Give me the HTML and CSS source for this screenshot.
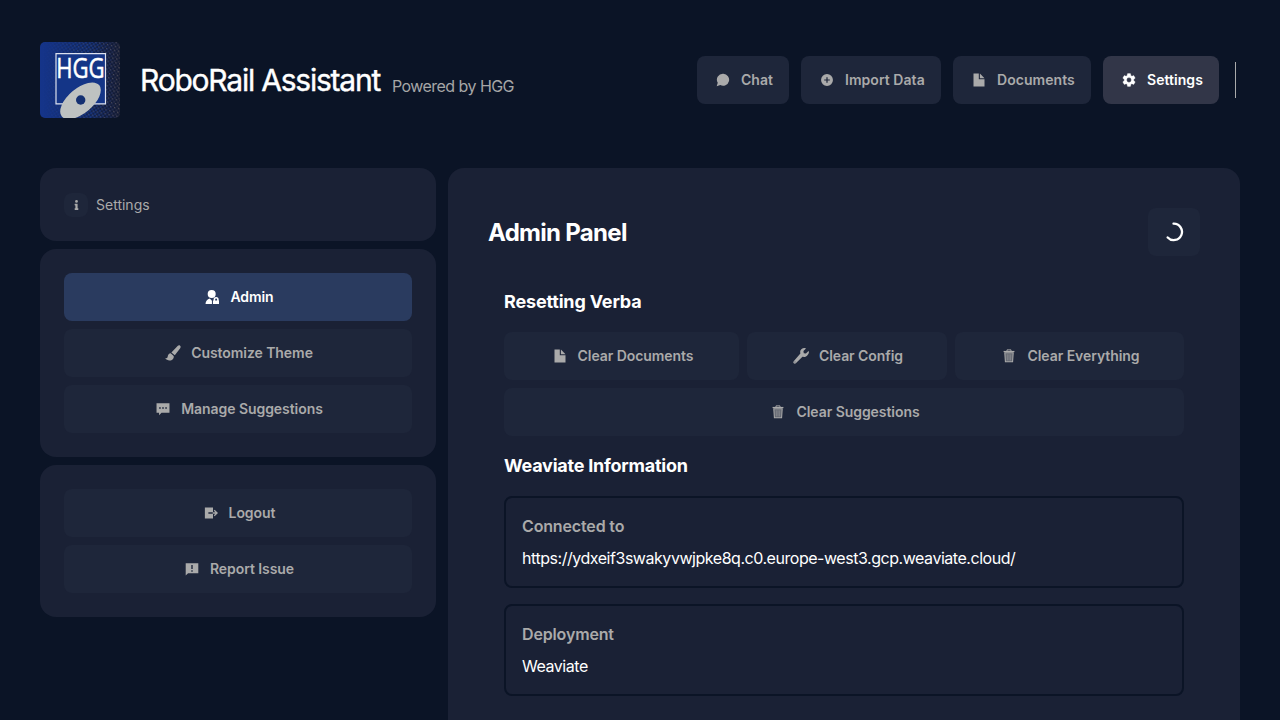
FILE: index.html
```html
<!DOCTYPE html>
<html lang="en">
<head>
<meta charset="utf-8">
<title>RoboRail Assistant</title>
<link rel="stylesheet" href="styles.css">
</head>
<body>
<svg class="defs" aria-hidden="true">
  <symbol id="doc" viewBox="0 0 14 14"><path d="M1.5 .5h5.3v5.8h5.7v7.2h-11z"/><path d="M7.9 .5l4.6 4.8H7.9z"/></symbol>
  <symbol id="trash" viewBox="0 0 16 16"><path d="M5.7 2.3V1h4.6v1.3" fill="none" stroke="currentColor" stroke-width="1.1"/><path d="M1.8 2.2h12.4v1.4H1.8z"/><path d="M3.2 4.2h9.6l-.7 10.4H3.9z" fill-opacity=".5" stroke="currentColor" stroke-width="1.2"/><path d="M6 6l.2 7M8 6v7M10 6l-.2 7" fill="none" stroke="currentColor" stroke-width=".5"/></symbol>
</svg>
<header class="header">
  <div class="brand">
    <svg class="logo" viewBox="0 0 80 76">
      <defs>
        <linearGradient id="logo-blue"><stop offset="0" stop-color="#153489"/><stop offset=".62" stop-color="#17357f"/><stop offset=".85" stop-color="#1d2b58"/><stop offset="1" stop-color="#292b3c"/></linearGradient>
        <linearGradient id="fade"><stop offset=".05" stop-color="#000"/><stop offset="1" stop-color="#fff"/></linearGradient>
        <pattern id="dots" width="4" height="4" patternUnits="userSpaceOnUse" patternTransform="rotate(12)"><path d="M0 0h2v2H0zM2 2h2v2H2z" fill="#111a35"/><path d="M2 0h1v1H2z" fill="#54515a"/></pattern>
        <mask id="dot-mask"><path d="M0 0h80v76H0z" fill="url(#fade)"/></mask>
      </defs>
      <path d="M0 0h80v76H0z" fill="url(#logo-blue)"/>
      <path d="M0 0h80v76H0z" fill="url(#dots)" mask="url(#dot-mask)"/>
      <path d="M16 11.7h49.5v50.2H16z" fill="#143587" stroke="#dce1ef" stroke-width="1.2"/>
      <text class="logo-text" x="16.2" y="35.8" textLength="48.5" lengthAdjust="spacingAndGlyphs">HGG</text>
      <ellipse cx="40.5" cy="58.8" rx="24.4" ry="12.4" transform="rotate(-40 40.5 58.8)" fill="#bec2c1"/>
      <circle cx="40.7" cy="58" r="4.7" fill="#143072"/>
    </svg>
    <h1 class="title">RoboRail Assistant</h1>
    <span class="tagline">Powered by HGG</span>
  </div>
  <nav class="nav">
    <button class="btn nav-btn chat"><svg class="icon" viewBox="0 0 16 16"><path d="M8.4 .8a6.9 6.9 0 1 1-3.5 13L.8 15l1.2-3.8A6.9 6.9 0 0 1 8.4 .8z"/></svg><span>Chat</span></button>
    <button class="btn nav-btn import"><svg class="icon" viewBox="0 0 16 16"><path fill-rule="evenodd" d="M8 1.2a6.8 6.8 0 1 0 0 13.6A6.8 6.8 0 0 0 8 1.2zM7.3 4.8h1.4v2.5h2.5v1.4H8.7v2.5H7.3V8.7H4.8V7.3h2.5z"/></svg><span>Import Data</span></button>
    <button class="btn nav-btn documents"><svg class="icon"><use href="#doc"/></svg><span>Documents</span></button>
    <button class="btn nav-btn settings selected"><svg class="icon" viewBox="1.5 1.5 21 21"><path d="M19.14 12.94c.04-.3.06-.61.06-.94s-.02-.64-.07-.94l2.03-1.58a.49.49 0 0 0 .12-.61l-1.92-3.32a.488.488 0 0 0-.59-.22l-2.39.96c-.5-.38-1.03-.7-1.62-.94l-.36-2.54a.484.484 0 0 0-.48-.41h-3.84c-.24 0-.43.17-.47.41l-.36 2.54c-.59.24-1.13.57-1.62.94l-2.39-.96c-.22-.08-.47 0-.59.22L2.74 8.87c-.12.21-.08.47.12.61l2.03 1.58c-.05.3-.09.63-.09.94s.02.64.07.94l-2.03 1.58a.49.49 0 0 0-.12.61l1.92 3.32c.12.22.37.29.59.22l2.39-.96c.5.38 1.03.7 1.62.94l.36 2.54c.05.24.24.41.48.41h3.84c.24 0 .44-.17.47-.41l.36-2.54c.59-.24 1.13-.56 1.62-.94l2.39.96c.22.08.47 0 .59-.22l1.92-3.32a.49.49 0 0 0-.12-.61zM12 15.6A3.6 3.6 0 1 1 12 8.4a3.6 3.6 0 0 1 0 7.2z" stroke="currentColor" stroke-width=".4"/></svg><span>Settings</span></button>
    <span class="divider"></span>
  </nav>
</header>
<main class="layout">
  <aside class="sidebar">
    <section class="panel crumb">
      <span class="info"><svg viewBox="0 0 192 512"><path d="M20 424.229h20V279.771H20c-11.046 0-20-8.954-20-20V212c0-11.046 8.954-20 20-20h112c11.046 0 20 8.954 20 20v212.229h20c11.046 0 20 8.954 20 20V492c0 11.046-8.954 20-20 20H20c-11.046 0-20-8.954-20-20v-47.771c0-11.046 8.954-20 20-20zM96 0a72 72 0 1 0 0 144A72 72 0 0 0 96 0z"/></svg></span>
      <span>Settings</span>
    </section>
    <section class="panel stack">
      <button class="btn active"><svg class="icon" viewBox="1 1 22 22"><path fill-rule="evenodd" d="M11.5 13.6a6.3 6.3 0 1 0 0-12.6 6.3 6.3 0 0 0 0 12.6zM1.8 23c.2-4.4 2.7-7.5 6.6-8.5l3.5 3.2V23zM22.5 17.5h1V23h-10v-5.5h1V16a4 4 0 0 1 8 0zm-2.5 0V16a1.5 1.5 0 0 0-3 0v1.5z"/></svg><span>Admin</span></button>
      <button class="btn"><svg class="icon wide" viewBox="0 0 16 16"><path d="M15.1.8c.7.6.7 1.5.1 2.4L9.8 10.2 6.4 7.4 12.6 1c.8-.7 1.8-.9 2.5-.2zM5.6 8.2l3.1 2.7c.5 2.5-1.4 4.5-4.1 4.5-1.8 0-3.5-.8-4.4-2.1 1.5 0 2.3-.5 2.5-1.9.2-1.8 1.4-3 2.9-3.2z"/></svg><span>Customize Theme</span></button>
      <button class="btn"><svg class="icon" viewBox="0 0 16 16"><path fill-rule="evenodd" d="M.6 1.5h14.8v10.7H6.3l-2.8 3v-3H.6zM3.6 6v1.8h1.8V6zm3.5 0v1.8h1.8V6zm3.5 0v1.8h1.8V6z"/></svg><span>Manage Suggestions</span></button>
    </section>
    <section class="panel stack">
      <button class="btn"><svg class="icon" viewBox="0 0 16 16"><path fill-rule="evenodd" d="M1 1.8h9.3v5.4H5v1.6h5.3v5.4H1z"/><path d="M10 7.2h3L11.2 5.4l1-1L16 8l-3.8 3.6-1-1L13 8.8h-3z"/></svg><span>Logout</span></button>
      <button class="btn"><svg class="icon" viewBox="0 0 16 16"><path fill-rule="evenodd" d="M.8 1.3h14.4v11.5H3.5L.8 15.3zM7.2 3.3v4.8h1.6V3.3zm0 6.1V11h1.6V9.4z"/></svg><span>Report Issue</span></button>
    </section>
  </aside>
  <section class="panel admin">
    <div class="admin-head">
      <h2>Admin Panel</h2>
      <span class="loading"><svg viewBox="0 0 20 20"><path d="M9.5 1.7A8.2 8.2 0 1 1 3.7 15.4" fill="none" stroke="#fff" stroke-width="2.3" stroke-linecap="round"/></svg></span>
    </div>
    <div class="content">
      <h3>Resetting Verba</h3>
      <div class="actions">
        <button class="btn"><svg class="icon"><use href="#doc"/></svg><span>Clear Documents</span></button>
        <button class="btn"><svg class="icon wide" viewBox="0 0 512 512"><path d="M507.73 109.1c-2.24-9.03-13.54-12.09-20.12-5.51l-74.36 74.36-67.88-11.31-11.31-67.88 74.36-74.36c6.62-6.62 3.43-17.9-5.66-20.16-47.38-11.74-99.55.91-136.58 37.93-39.64 39.64-40.55 87.1-30.05 137.2L28.74 412.76c-24.99 24.99-24.99 55.51-5 75.5s50.51 19.99 75.5-5l203.21-203.21c50.12 10.71 107.47 5.68 147.37-34.22 37.07-37.07 69.7-89.32 57.91-136.73zM64 462c-9 0-16-7-16-16s7-16 16-16 16 7 16 16-7 16-16 16z"/></svg><span>Clear Config</span></button>
        <button class="btn"><svg class="icon"><use href="#trash"/></svg><span>Clear Everything</span></button>
        <button class="btn full"><svg class="icon"><use href="#trash"/></svg><span>Clear Suggestions</span></button>
      </div>
      <h3 class="wider">Weaviate Information</h3>
      <div class="card"><p class="label">Connected to</p><p>https://ydxeif3swakyvwjpke8q.c0.europe-west3.gcp.weaviate.cloud/</p></div>
      <div class="card"><p class="label">Deployment</p><p>Weaviate</p></div>
    </div>
  </section>
</main>
</body>
</html>
```

FILE: styles.css
```css
* { box-sizing: border-box; }
body {
  margin: 0;
  height: 720px;
  overflow: hidden;
  background: #0b1426;
  color: #fff;
  font: 16px/24px Inter, "Liberation Sans", sans-serif;
}
h1, h2, h3, p { margin: 0; }
.defs { position: absolute; width: 0; height: 0; }
.header {
  height: 160px;
  padding: 0 44px 0 40px;
  display: flex;
  align-items: center;
  justify-content: space-between;
}
.brand { display: flex; align-items: center; }
.logo { width: 80px; height: 76px; border-radius: 5px; margin-right: 20px; }
.logo-text { font: 500 26.5px "Open Sans", sans-serif; fill: #fff; stroke: #fff; stroke-width: 0.5px; }
.title { width: 252px; font-size: 30px; line-height: 36px; font-weight: 400; letter-spacing: -1.22px; white-space: nowrap; -webkit-text-stroke: 0.4px #fff; }
.tagline { color: #a6a6a6; font-weight: 400; letter-spacing: -0.55px; padding-top: 12px; white-space: nowrap; }
.nav { display: flex; align-items: center; gap: 12px; }
.btn {
  display: flex;
  align-items: center;
  justify-content: center;
  gap: 8px;
  height: 48px;
  padding: 0 16px;
  border: 0;
  border-radius: 8px;
  background: #1e263a;
  color: #aaa;
  font: 600 14px/20px Inter, "Liberation Sans", sans-serif;
  letter-spacing: -0.06px;
  white-space: nowrap;
}
.nav-btn { justify-content: flex-start; letter-spacing: 0.05px; }
.chat { width: 92px; }
.import { width: 140px; }
.documents { width: 138px; }
.settings { width: 116px; }
.selected { background: #323648; color: #fff; }
.icon { width: 14px; height: 14px; margin: 0 3px; fill: currentColor; flex: none; }
.icon.wide { width: 16px; height: 16px; margin: 0 2px; }
.divider { width: 1px; height: 36px; margin-left: 4px; background: #aaa; }
.layout { display: grid; grid-template-columns: 396px 792px; gap: 12px; padding: 8px 40px 0; }
.sidebar { display: flex; flex-direction: column; gap: 8px; }
.panel { background: #1a2135; border-radius: 16px; }
.crumb { height: 73px; display: flex; align-items: center; gap: 8px; padding: 0 24px; color: #aaa; font-size: 14px; line-height: 20px; }
.info { width: 24px; height: 24px; border-radius: 8px; background: #1e263a; display: flex; align-items: center; justify-content: center; }
.info svg { height: 10px; width: 5px; fill: #aaa; }
.stack { display: flex; flex-direction: column; gap: 8px; padding: 24px; }
.active { background: #2a3b5f; color: #fff; }
.admin { height: 552px; padding: 40px 40px 0; border-radius: 16px 16px 0 0; }
.admin-head { display: flex; align-items: center; justify-content: space-between; height: 48px; }
h2 { font-size: 24px; line-height: 32px; font-weight: 700; letter-spacing: -0.7px; padding-top: 2px; }
.loading { width: 52px; height: 48px; border-radius: 8px; background: #1e263a; display: flex; align-items: center; justify-content: center; }
.loading svg { width: 20px; height: 20px; }
.content { padding: 32px 16px 0; display: flex; flex-direction: column; gap: 16px; }
h3 { font-size: 18px; line-height: 28px; font-weight: 700; letter-spacing: -0.17px; }
.wider { letter-spacing: -0.24px; }
.actions { display: grid; grid-template-columns: 235fr 200fr 229fr; gap: 8px; }
.full { grid-column: 1 / -1; }
.card { height: 92px; border: 2px solid #0b1426; border-radius: 8px; padding: 16px; display: flex; flex-direction: column; gap: 8px; letter-spacing: -0.46px; }
.label { color: #aaa; font-weight: 600; letter-spacing: -0.15px; }
```
